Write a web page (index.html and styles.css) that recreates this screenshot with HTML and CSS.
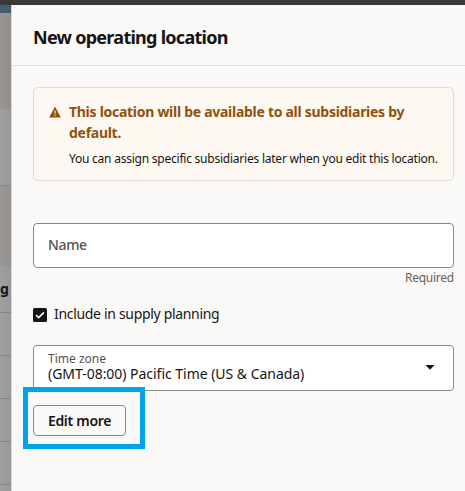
FILE: index.html
```html
<!DOCTYPE html>
<html lang="en">
<head>
<meta charset="utf-8">
<title>New operating location</title>
<link rel="stylesheet" href="styles.css">
</head>
<body>
<div class="topbar"></div>
<div class="layout">
  <div class="backdrop">
    <div class="accent"></div>
    <div class="band band-head"></div>
    <div class="band band-mid"></div>
    <div class="band band-low"></div>
    <div class="band band-label">g</div>
    <div class="row"></div>
    <div class="row"></div>
    <div class="row"></div>
    <div class="row"></div>
    <div class="row"></div>
  </div>
  <main class="drawer">
    <header class="header"><h1 class="title">New operating location</h1></header>
    <section class="content">
      <div class="alert">
        <svg class="warning" viewBox="0 0 12 12"><path d="M6 .5 11.8 11.5H.2Z" fill="#8f520a"/><path d="M6 4.5v3.2M6 8.8v1.2" stroke="#fff8f0" stroke-width="1.1"/></svg>
        <div class="alert-body">
          <div class="alert-title">This location will be available to all subsidiaries by<br>default.</div>
          <div class="alert-text">You can assign specific subsidiaries later when you edit this location.</div>
        </div>
      </div>
      <div class="field name">Name</div>
      <div class="hint">Required</div>
      <div class="check">
        <svg class="box" viewBox="0 0 14 14"><rect width="14" height="14" rx="1.5" fill="#161513"/><path d="m3.1 7.1 2.6 2.5 5.2-5.2" fill="none" stroke="#fff" stroke-width="1.5"/></svg>
        <span class="check-label">Include in supply planning</span>
      </div>
      <div class="field select">
        <div class="select-text"><div class="label">Time zone</div><div class="value">(GMT-08:00) Pacific Time (US &amp; Canada)</div></div>
        <svg class="caret" viewBox="0 0 10 5"><path d="M.5 0h9L5 4.7Z" fill="#161513"/></svg>
      </div>
      <div class="action"><button class="button" type="button">Edit more</button><div class="highlight"></div></div>
    </section>
  </main>
</div>
</body>
</html>
```
FILE: styles.css
```css
* { box-sizing: border-box; }
body { margin: 0; height: 491px; overflow: hidden; background: #fbf9f8; color: #161513; font-family: "Noto Sans", sans-serif; font-size: 14px; }
.topbar { height: 5px; background: #3a3a3a; }
.layout { display: flex; height: 486px; }
.backdrop { width: 11px; flex: none; overflow: hidden; background: linear-gradient(90deg, #9f9f9f, #999); }
.accent { height: 8px; background: #40606d; }
.band-head { height: 96px; background: linear-gradient(90deg, #9a9693, #928e8c); }
.band-mid { height: 77px; border-bottom: 1px solid #868686; }
.band-low { height: 80px; background: linear-gradient(90deg, #9b9998, #94908e); }
.band-label { height: 47px; border-bottom: 1px solid #868686; font-weight: 700; line-height: 45px; }
.row { height: 43px; border-bottom: 1px solid #868686; }
.drawer { flex: 1; border-left: 1px solid #d8d6d4; }
.header { height: 61px; border-bottom: 1px solid #dfddda; padding: 19px 0 0 21px; }
.title { margin: 0; font-size: 18px; line-height: 26px; font-weight: 700; letter-spacing: -.73px; }
.content { padding: 21px 11px 0 21px; }
.alert { display: flex; width: 421px; height: 94px; border: 1px solid #dedbd6; border-radius: 5px; background: #fef8f2; padding: 14px 0 0 15px; }
.warning { width: 12px; height: 12px; margin: 4px 8px 0 0; flex: none; }
.alert-body { white-space: nowrap; }
.alert-title { color: #8f520a; font-size: 14px; font-weight: 700; line-height: 21px; letter-spacing: -.28px; margin-top: -1px; }
.alert-text { margin-top: 6px; font-size: 12px; line-height: 20px; letter-spacing: -.23px; }
.field { width: 421px; border: 1px solid #8b8987; border-radius: 4px; background: #fff; padding-left: 14px; }
.name { height: 45px; margin-top: 42px; line-height: 42px; color: #55524f; font-weight: 500; letter-spacing: -.35px; }
.hint { width: 421px; height: 20px; line-height: 20px; text-align: right; font-size: 12px; letter-spacing: -.25px; color: #65625f; }
.check { display: flex; align-items: flex-start; gap: 7px; height: 20px; margin-top: 16px; line-height: 20px; }
.check-label { letter-spacing: -.32px; }
.box { width: 14px; height: 14px; margin-top: 4px; }
.select { display: flex; justify-content: space-between; align-items: flex-start; height: 46px; margin-top: 21px; padding: 4px 18px 0 14px; white-space: nowrap; }
.label { font-size: 12px; line-height: 17px; color: #55524f; }
.value { line-height: 14px; letter-spacing: -.03px; }
.caret { width: 10px; height: 5px; margin-top: 15px; }
.action { position: relative; width: 93px; margin-top: 14px; }
.button { display: block; width: 93px; height: 31px; padding: 0; border: 1px solid #8b8987; border-radius: 4px; background: #fbf9f8; color: #161513; font: 600 14px/29px "Noto Sans", sans-serif; letter-spacing: -.3px; }
.highlight { position: absolute; left: -10px; top: -18px; width: 122px; height: 62px; border: 5px solid #00a4ea; }
```
